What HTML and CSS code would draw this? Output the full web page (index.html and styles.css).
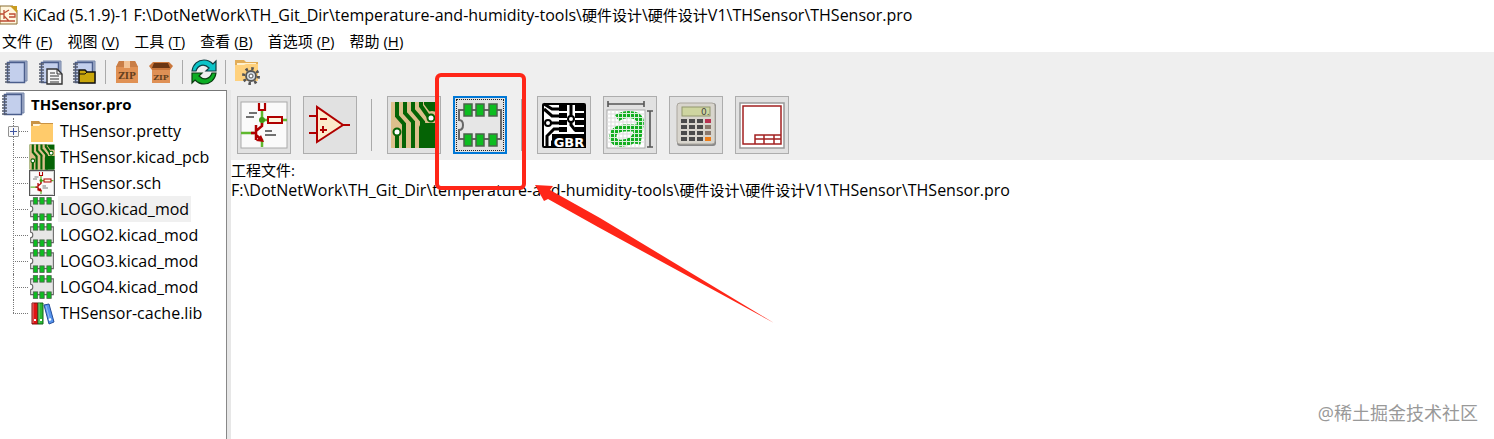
FILE: index.html
```html
<!DOCTYPE html>
<html lang="zh-CN">
<head>
  <meta charset="UTF-8" />
  <meta name="viewport" content="width=device-width, initial-scale=1" />
  <title>KiCad</title>

  <link rel="stylesheet" href="styles.css">
</head>
<body>
  <!-- Shared icons -->
  <svg class="sprites" aria-hidden="true">
    <symbol id="book" viewBox="0 0 26 26">
      <path d="M6 2h18v20h-2" fill="#a9b4ce" stroke="#7585a8"/>
      <rect x="4.500" y="3.500" width="17" height="20" fill="#c3cfec" stroke="#4b5e8c" stroke-width="1.500"/>
      <path d="M2 5h5M2 8h5M2 11h5M2 14h5M2 17h5M2 20h5M2 23h5" stroke="#555c6c" stroke-width="1.400"/>
    </symbol>
    <symbol id="folder" viewBox="0 0 26 26">
      <path d="M2 6V3h8l2 2h12v4H2z" fill="#c99345"/>
      <path d="M4 6h19v4H4z" fill="#fff5dd"/>
      <path d="M2 8h8l2-2h12v18H2z" fill="#ffcb6b"/>
    </symbol>
    <symbol id="schematic" viewBox="0 0 48 48">
      <rect x="1" y="1" width="46" height="46" fill="#fafafa" stroke="#aaa"/>
      <path d="M22 9v15M22 38v8M1 32h13M22 19h7M42 19h5" stroke="#5fb82e" stroke-width="2.500"/>
      <circle cx="22" cy="19" r="3" fill="#3f9a16"/>
      <path d="M19 2v7h6V2" fill="#fff" stroke="#b00000" stroke-width="2.200"/>
      <rect x="28" y="16" width="14" height="6" fill="#fff5df" stroke="#b00000" stroke-width="2"/>
      <path d="M11 32h5M16 24v15M16 30l6-5v-3M16 34l6 5" fill="none" stroke="#b00000" stroke-width="2.500"/>
      <path d="M24 41l-8-1 5-6z" fill="#b00000"/>
      <path d="M9 12h8M6 16h8M25 30h7M25 34h11" stroke="#444" stroke-width="1.400"/>
    </symbol>
    <symbol id="pcb" viewBox="0 0 48 48">
      <rect x="1" y="1" width="46" height="46" fill="#056305"/>
      <path d="M1 1h26v9l3 7v30H1z" fill="#dcc08c"/>
      <path d="M29 1v4l9 12h4" fill="none" stroke="#dcc08c" stroke-width="10"/>
      <circle cx="42" cy="17" r="7" fill="#dcc08c"/>
      <path d="M7 1v14l7 8v24M15 1v11l8 9v26M23 1v8l10 12v26M31 1v4l7 10h4M7 32v15" fill="none" stroke="#056305" stroke-width="4"/>
      <path d="M31 22h16v25H29V26z" fill="#056305"/>
      <path d="M27 24v23" stroke="#dcc08c" stroke-width="3"/>
      <circle cx="41" cy="17" r="3.500" fill="#fff" stroke="#056305" stroke-width="2"/>
      <circle cx="7" cy="31" r="3.500" fill="#fff" stroke="#056305" stroke-width="2"/>
    </symbol>
    <symbol id="footprint" viewBox="0 0 48 48">
      <path d="M3 9h42v29H3v-9q4 0 4-5t-4-5z" fill="#e6e6e6" stroke="#666" stroke-width="2"/>
      <g fill="#0dbd20" stroke="#4c634c" stroke-width="1.500">
        <rect x="8" y="3" width="8" height="12"/><rect x="20" y="3" width="8" height="12"/><rect x="33" y="3" width="8" height="12"/>
        <rect x="8" y="33" width="8" height="12"/><rect x="20" y="33" width="8" height="12"/><rect x="33" y="33" width="8" height="12"/>
      </g>
    </symbol>
    <symbol id="library" viewBox="0 0 26 26">
      <path d="M3 3h6v21H3z" fill="#e01515" stroke="#7c1111"/>
      <path d="M9 3h5v21H9z" fill="#2bbb34" stroke="#136319"/>
      <path d="M15 5l5-1 5 18-5 2z" fill="#5594ee" stroke="#254d99"/>
      <path d="M4 3v20M10 3v20M17 6l4 15" stroke="#fff" opacity=".4"/>
      <path d="M5 20h2M11 20h2M20 20l2-1" stroke="#fff" stroke-width="2"/>
    </symbol>
  </svg>

  <header class="titlebar">
    <svg class="app-icon" viewBox="0 0 18 20" aria-hidden="true">
      <path d="M0 1h13l4 4v14H0z" fill="#fff6de" stroke="#8a6d30"/>
      <path d="M10 1h7v7z" fill="#c99b20"/>
      <path d="M0 9h4M4 5v9M4 8l5-3M4 11l5 5M9 9h6v3H9M0 16h15" fill="none" stroke="#bd4b34" stroke-width="1.300"/>
    </svg>
    <span class="path">KiCad (5.1.9)-1 F:\DotNetWork\TH_Git_Dir\temperature-and-humidity-tools\<span class="cjk">硬件设计</span>\<span class="cjk">硬件设计</span>V1\THSensor\THSensor.pro</span>
  </header>

  <nav class="menubar">
    <button>文件 (<u>F</u>)</button>
    <button>视图 (<u>V</u>)</button>
    <button>工具 (<u>T</u>)</button>
    <button>查看 (<u>B</u>)</button>
    <button>首选项 (<u>P</u>)</button>
    <button>帮助 (<u>H</u>)</button>
  </nav>

  <div class="toolbar">
    <button aria-label="New project"><svg viewBox="0 0 26 26"><use href="#book"/></svg></button>
    <button aria-label="New project from template">
      <svg viewBox="0 0 26 26">
        <use href="#book"/>
        <path d="M10 10h10l5 5v10H10z" fill="#f5f5f5" stroke="#333" stroke-width="1.400"/>
        <path d="M20 10v5h5M13 14h5M13 17h9M13 20h9M13 23h9" fill="none" stroke="#333"/>
      </svg>
    </button>
    <button aria-label="Open project">
      <svg viewBox="0 0 26 26">
        <use href="#book"/>
        <path d="M8 24V11h6l2 2h8v11z" fill="#c9a60b" stroke="#111" stroke-width="1.500"/>
        <path d="M8 15h6l2-2" fill="none" stroke="#111"/>
      </svg>
    </button>
    <span class="divider"></span>
    <button aria-label="Archive project">
      <svg viewBox="0 0 26 26">
        <path d="M5 2h16l3 6v16H2V8z" fill="#e09154"/>
        <path d="M5 2h16l3 6H2z" fill="#c97e47"/>
        <path d="M10 2h6v7h-6z" fill="#f3c497"/>
        <text class="zip" x="13" y="20">ZIP</text>
      </svg>
    </button>
    <button aria-label="Unarchive project">
      <svg viewBox="0 0 26 26">
        <path d="M4 8h18v16H4z" fill="#df9055"/>
        <path d="M5 3h16l4 4-3 4H4L1 7z" fill="#c9763b"/>
        <path d="M6 4h14l2 5H4z" fill="#6b3613"/>
        <text class="zip zip-small" x="13" y="21">ZIP</text>
      </svg>
    </button>
    <span class="divider"></span>
    <button aria-label="Refresh">
      <svg viewBox="0 0 26 26">
        <path d="M1 12C2 5 7 1 13 1q5 0 9 4l3-3v10H15l3-3C13 4 7 6 5 12z" fill="#0bc4c8" stroke="#103d40" stroke-width="1.200"/>
        <path d="M25 14c-1 7-6 11-12 11q-5 0-9-4l-3 3V14h10l-3 3c5 5 11 3 13-3z" fill="#0cae24" stroke="#0a3d12" stroke-width="1.200"/>
      </svg>
    </button>
    <span class="divider"></span>
    <button aria-label="Open project folder">
      <svg viewBox="0 0 26 26">
        <path d="M1 1h9l2 2h12v19H1z" fill="#e2ad58"/>
        <path d="M3 4h19v4H3z" fill="#fff0cd"/>
        <path d="M1 6h9l2-1h12v17H1z" fill="#ffd17d"/>
        <circle cx="17" cy="17" r="7.500" fill="none" stroke="#555" stroke-width="3" stroke-dasharray="2.500 3.390"/>
        <circle cx="17" cy="17" r="5" fill="#d2d9df" stroke="#555" stroke-width="1.800"/>
        <circle cx="17" cy="17" r="2" fill="#fff" stroke="#555"/>
      </svg>
    </button>
  </div>

  <div class="workspace">
    <aside class="project-tree">
      <div class="tree-root"><svg><use href="#book"/></svg>THSensor.pro</div>
      <ul>
        <li><button class="expand" aria-label="Expand"></button><svg><use href="#folder"/></svg><span>THSensor.pretty</span></li>
        <li><svg><use href="#pcb"/></svg><span>THSensor.kicad_pcb</span></li>
        <li><svg class="framed"><use href="#schematic"/></svg><span>THSensor.sch</span></li>
        <li><svg><use href="#footprint"/></svg><span class="selected">LOGO.kicad_mod</span></li>
        <li><svg><use href="#footprint"/></svg><span>LOGO2.kicad_mod</span></li>
        <li><svg><use href="#footprint"/></svg><span>LOGO3.kicad_mod</span></li>
        <li><svg><use href="#footprint"/></svg><span>LOGO4.kicad_mod</span></li>
        <li><svg><use href="#library"/></svg><span>THSensor-cache.lib</span></li>
      </ul>
    </aside>

    <main>
      <div class="launcher">
        <button aria-label="Schematic editor"><svg><use href="#schematic"/></svg></button>
        <button aria-label="Symbol editor">
          <svg viewBox="0 0 48 48">
            <path d="M3 15h8M3 32h8M36 24h8" stroke="#b00000" stroke-width="2"/>
            <path d="M11 6v35l26-17z" fill="#fcebcb" stroke="#b00000" stroke-width="2"/>
            <path d="M14 18h7M14 29h7M17 25v7" stroke="#b00000" stroke-width="2"/>
          </svg>
        </button>
        <span class="divider"></span>
        <button aria-label="PCB editor"><svg><use href="#pcb"/></svg></button>
        <button class="focused" aria-label="Footprint editor"><svg><use href="#footprint"/></svg></button>
        <span class="divider"></span>
        <button aria-label="Gerber viewer">
          <svg viewBox="0 0 48 48">
            <rect x="2" y="2" width="44" height="45" rx="2" fill="#000"/>
            <path d="M4 4h40v29H12v12H4z" fill="#fff"/>
            <path d="M19 4h8v6h-8zM19 12h8v5h-8zM19 19h8v5h-8zM19 26h8v5h-8zM35 4h9v6h-9zM35 12h9v5h-9zM35 19h9v5h-9zM35 26h9v5h-9z" fill="#000"/>
            <path d="M4 3l8 5h8M4 8l8 7h8M9 22h12M20 28h-6l-7 7v10M31 3v21l4 5h3" fill="none" stroke="#000" stroke-width="3"/>
            <circle cx="8" cy="22" r="3" fill="#fff" stroke="#000" stroke-width="2"/>
            <circle cx="31" cy="18" r="3" fill="#fff" stroke="#000" stroke-width="2"/>
            <path d="M11 47V40l6-6h29v13z" fill="#000"/>
            <text class="gbr" x="29" y="46">GBR</text>
          </svg>
        </button>
        <button aria-label="Bitmap converter">
          <svg viewBox="0 0 48 48">
            <defs>
              <pattern id="cells" width="4" height="4" patternUnits="userSpaceOnUse">
                <rect width="4" height="4" fill="#d9efd9"/><rect x="1" y="1" width="3" height="3" fill="#12ad20"/>
              </pattern>
            </defs>
            <rect x="1" y="9" width="38" height="38" fill="#fff" stroke="#aaa"/>
            <path d="M5 9v38M9 9v38M13 9v38M17 9v38M21 9v38M25 9v38M29 9v38M33 9v38M1 13h38M1 17h38M1 21h38M1 25h38M1 29h38M1 33h38M1 37h38M1 41h38" stroke="#ddd"/>
            <!-- drawn as strokes so the cell pattern fills the loop evenly -->
            <path d="M11 17q8-5 16-3 9 2 7 11l-3 18M33 27H18Q6 28 7 37q1 6 10 5 12-1 14-11" fill="none" stroke="url(#cells)" stroke-width="7"/>
            <path d="M2 3h36M2 0v6M38 0v6M44 10v36M41 10h6M41 46h6" stroke="#555" stroke-width="1.600"/>
          </svg>
        </button>
        <button aria-label="PCB calculator">
          <svg viewBox="0 0 48 48">
            <rect x="5" y="2" width="39" height="43" rx="3" fill="#888"/>
            <rect x="5" y="2" width="38" height="41" rx="3" fill="#d8d5cd" stroke="#aaa69e"/>
            <rect x="10" y="6" width="28" height="9" fill="#ced5a0" stroke="#92976f"/>
            <text class="digit" x="29" y="14">0.</text>
            <g fill="none" stroke="#4b4b4b" stroke-width="4" stroke-dasharray="6 2">
              <path d="M9 20h30M9 26h30M9 32h30M9 38h30"/>
            </g>
            <path d="M33 20h6" stroke="#b83251" stroke-width="4"/>
            <path d="M33 26h6M33 32h6" stroke="#8a796d" stroke-width="4"/>
            <path d="M33 38h6" stroke="#ed7d18" stroke-width="4"/>
          </svg>
        </button>
        <button aria-label="Page layout editor">
          <svg viewBox="0 0 48 48">
            <rect x="2" y="2" width="44" height="45" fill="#fff" stroke="#999" stroke-width="1.500"/>
            <path d="M5 5h38v38H5zM17 43v-9h26M17 38h26M26 34v9M36 34v9" fill="none" stroke="#a32020" stroke-width="1.500"/>
          </svg>
        </button>
      </div>
      <div class="messages">
        <p><span class="cjk">工程文件</span>:</p>
        <p class="path">F:\DotNetWork\TH_Git_Dir\temperature-and-humidity-tools\<span class="cjk">硬件设计</span>\<span class="cjk">硬件设计</span>V1\THSensor\THSensor.pro</p>
      </div>
    </main>
  </div>

  <svg class="annotation" viewBox="0 0 342 252" aria-hidden="true">
    <rect x="4" y="4" width="87" height="113" rx="4" fill="none" stroke="#ff2618" stroke-width="4"/>
    <path d="M102 114l18 1-3 4 50 28 174 105L165 156l-50-28-4 2z" fill="#ff2618"/>
  </svg>
  <div class="watermark">@稀土掘金技术社区</div>
</body>
</html>
```
FILE: styles.css
```css
*, *::before, *::after {
  box-sizing: border-box;
}

body {
  display: flex;
  flex-direction: column;
  position: relative;
  min-height: 100vh;
  margin: 0;
  overflow: hidden;
  background: #fff;
  color: #000;
  font-family: "Open Sans", "Noto Sans CJK SC", sans-serif;
  font-size: 15px;
  line-height: 20px;
}

button {
  display: flex;
  align-items: center;
  justify-content: center;
  padding: 0;
  border: 0;
  background: none;
  color: inherit;
  font: inherit;
}

svg {
  display: block;
  flex-shrink: 0;
}

.sprites {
  position: absolute;
  width: 0;
  height: 0;
}

.path {
  font-size: 16px;
}

.cjk {
  font-size: 15px;
}

.titlebar {
  display: flex;
  align-items: center;
  gap: 5px;
  height: 29px;
  white-space: nowrap;
}

.app-icon {
  width: 18px;
  height: 20px;
}

.menubar {
  display: flex;
  gap: 15px;
  height: 23px;
  padding-left: 2px;
}

.menubar button {
  white-space: pre;
}

.menubar u {
  text-underline-offset: 2px;
}

.toolbar {
  display: flex;
  align-items: center;
  height: 38px;
  margin-left: -1px;
  padding-top: 2px;
  background: #efefef;
}

.toolbar button {
  width: 34px;
  height: 36px;
}

.toolbar svg {
  width: 26px;
  height: 26px;
}

.divider {
  background: #aaa;
}

.toolbar .divider {
  width: 1px;
  height: 24px;
  margin: 0 4px;
}

.zip {
  fill: #65401e;
  font: bold 9px "DejaVu Serif", serif;
  text-anchor: middle;
}

.zip-small {
  font-size: 8px;
}

.workspace {
  display: flex;
  flex: 1;
}

/* Project tree */
.project-tree {
  width: 227px;
  flex-shrink: 0;
  border-top: 1px solid #777;
  border-right: 1px solid #888;
}

.tree-root,
.project-tree li {
  display: flex;
  align-items: center;
  height: 26px;
}

.tree-root {
  gap: 5px;
  margin-bottom: 1px;
  font-weight: 700;
}

.project-tree svg {
  width: 26px;
  height: 26px;
}

.project-tree .framed {
  border: 1px solid #555;
}

.project-tree ul {
  margin: 0;
  padding: 0;
  list-style: none;
}

.project-tree li {
  position: relative;
  gap: 3px;
  padding-left: 29px;
  font-size: 16px;
}

.project-tree li span {
  height: 26px;
  padding: 0 2px;
  line-height: 26px;
}

.project-tree .selected {
  background: #f0f0f0;
}

/* Dotted branch lines */
.project-tree li::before {
  content: '';
  position: absolute;
  top: 0;
  left: 13px;
  height: 100%;
  border-left: 1px dotted #777;
}

.project-tree li:last-child::before {
  height: 50%;
}

.project-tree li::after {
  content: '';
  position: absolute;
  top: 50%;
  left: 13px;
  width: 15px;
  border-top: 1px dotted #777;
}

.expand {
  position: absolute;
  left: 8px;
  z-index: 1;
  width: 11px;
  height: 11px;
  border: 1px solid #919191;
  border-radius: 1px;
  background:
    linear-gradient(#4055a0, #4055a0) center / 7px 1px no-repeat,
    linear-gradient(#4055a0, #4055a0) center / 1px 7px no-repeat,
    #f8f8f8;
}

/* Launcher and messages */
main {
  flex: 1;
  min-width: 0;
  border-left: 4px solid #e7e7e7;
}

.launcher {
  display: flex;
  align-items: center;
  gap: 12px;
  height: 70px;
  padding-left: 6px;
  background: #efefef;
}

.launcher button {
  width: 54px;
  height: 58px;
  border: 1px solid #adadad;
  background: #e1e1e1;
}

.launcher button svg {
  width: 48px;
  height: 48px;
}

.launcher .focused {
  border: 2px solid #0078d7;
  outline: 1px dotted #222;
  outline-offset: -4px;
}

.launcher .divider {
  width: 1px;
  height: 52px;
  margin: 0 3px 0 2px;
}

.gbr {
  fill: #fff;
  font: bold 13px "DejaVu Sans", sans-serif;
  text-anchor: middle;
}

.digit {
  fill: #444;
  font: 9px "DejaVu Sans", sans-serif;
}

.messages p {
  margin: 0;
  white-space: nowrap;
}

.annotation {
  position: absolute;
  top: 71px;
  left: 433px;
  width: 342px;
  height: 252px;
  pointer-events: none;
}

.watermark {
  position: absolute;
  right: 16px;
  bottom: 14px;
  color: #999;
  font-size: 18px;
  line-height: 24px;
}
```
